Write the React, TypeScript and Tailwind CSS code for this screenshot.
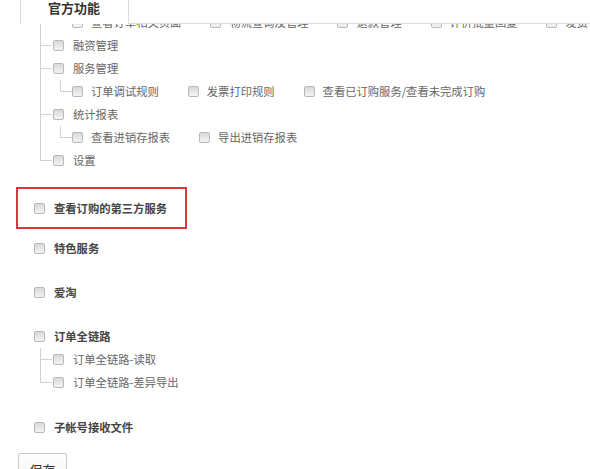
import React from "react";

const Box = () => (
  <span className="inline-block w-[11px] h-[11px] shrink-0 rounded-[2px] border border-[#b9b9b9] bg-gradient-to-b from-[#d9d9d9] to-[#f4f4f4]" />
);

const Item = ({ label, bold = false, gap = "ml-[9px]", mr = "" }: { label: string; bold?: boolean; gap?: string; mr?: string }) => (
  <span className={`flex items-center ${mr}`}>
    <Box />
    <span className={`${gap} whitespace-nowrap ${bold ? "font-bold text-[#444]" : "text-[#666]"}`}>{label}</span>
  </span>
);

type Node = { label: string; sub?: string[] };

const SubRow = ({ items }: { items: string[] }) => (
  <div className="flex">
    <div className="w-[12px] flex flex-col shrink-0">
      <div className="h-[12px] border-l border-b border-[#d2d2d2]" />
    </div>
    <div className="h-[23px] flex items-center">
      {items.map((t, i) => (
        <Item key={i} label={t} gap="ml-[8px]" mr={i < items.length - 1 ? "mr-[29px]" : ""} />
      ))}
    </div>
  </div>
);

const Level1 = ({ nodes }: { nodes: Node[] }) => (
  <div className="flex flex-col">
    {nodes.map((n, i) => {
      const last = i === nodes.length - 1;
      return (
        <div key={i} className="flex">
          <div className="w-[12px] flex flex-col shrink-0">
            <div className="h-[12px] border-l border-b border-[#d2d2d2]" />
            {!last && <div className="flex-1 border-l border-[#d2d2d2]" />}
          </div>
          <div className="flex flex-col">
            <div className="h-[23px] flex items-center">
              <span className="ml-[1px] flex items-center">
                <Item label={n.label} />
              </span>
            </div>
            {n.sub && (
              <div className="pl-[8px]">
                <SubRow items={n.sub} />
              </div>
            )}
          </div>
        </div>
      );
    })}
  </div>
);

const TopRow = ({ label }: { label: string }) => (
  <div className="h-[23px] flex items-center pl-[18px]">
    <Item label={label} bold />
  </div>
);

export default function App() {
  return (
    <div
      className="w-[590px] h-[469px] overflow-hidden bg-white text-[11.3px]"
      style={{ fontFamily: '"Noto Sans CJK SC", "Noto Sans", sans-serif' }}
    >
      {/* tab header */}
      <div className="flex h-[24px]">
        <div className="w-[20px]" />
        <div className="w-[109px] border-l border-r border-[#dcdcdc] bg-white pl-[27px]">
          <span className="block leading-[16px] text-[13px] font-bold text-[#333]">官方功能</span>
        </div>
        <div className="flex-1 border-b border-[#dcdcdc]" />
      </div>

      {/* tree (scrolled) */}
      <div className="h-[148px] overflow-hidden pl-[40px]">
        <div className="mt-[-36px]">
          <Level1
            nodes={[
              { label: "交易管理", sub: ["查看订单相关页面", "物流查询及管理", "退款管理", "评价批量回复", "发货管理"] },
              { label: "融资管理" },
              { label: "服务管理", sub: ["订单调试规则", "发票打印规则", "查看已订购服务/查看未完成订购"] },
              { label: "统计报表", sub: ["查看进销存报表", "导出进销存报表"] },
              { label: "设置" },
            ]}
          />
        </div>
      </div>

      {/* top-level items */}
      <div className="ml-[16px] mt-[15px] w-[171px] h-[42px] border-2 border-[#d9363e] flex items-center">
        <div className="pl-[16px] flex items-center">
          <Item label="查看订购的第三方服务" bold />
        </div>
      </div>

      <div className="ml-[16px] mt-[8px]">
        <TopRow label="特色服务" />
      </div>
      <div className="ml-[16px] mt-[21px]">
        <TopRow label="爱淘" />
      </div>
      <div className="ml-[16px] mt-[21px]">
        <TopRow label="订单全链路" />
        <div className="pl-[24px]">
          <Level1 nodes={[{ label: "订单全链路-读取" }, { label: "订单全链路-差异导出" }]} />
        </div>
      </div>
      <div className="ml-[16px] mt-[22px]">
        <TopRow label="子帐号接收文件" />
      </div>

      <div className="ml-[18px] mt-[14px]">
        <button className="w-[49px] h-[34px] border border-[#c8c8c8] rounded-[2px] bg-gradient-to-b from-white to-[#f0f0f0] text-[13px] text-[#333]">
          保存
        </button>
      </div>
    </div>
  );
}
